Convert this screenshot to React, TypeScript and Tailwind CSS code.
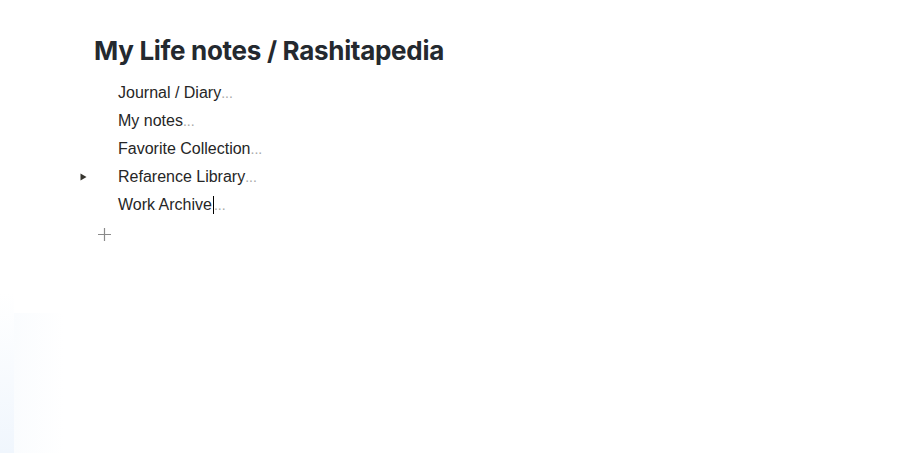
const items = [
  { title: "Journal / Diary", toggle: false },
  { title: "My notes", toggle: false },
  { title: "Favorite Collection", toggle: false },
  { title: "Refarence Library", toggle: true },
  { title: "Work Archive", toggle: false, caret: true },
];

function Triangle() {
  return (
    <svg width="7" height="8" viewBox="0 0 7 8" className="text-[#37352f]">
      <path d="M0.5 0.5 L6.5 4 L0.5 7.5 Z" fill="currentColor" />
    </svg>
  );
}

function PlusIcon() {
  return (
    <svg width="13" height="13" viewBox="0 0 13 13" className="text-[#8a8a8a]">
      <path d="M6.5 0 V13 M0 6.5 H13" stroke="currentColor" strokeWidth="1.2" />
    </svg>
  );
}

export default function App() {
  return (
    <div
      className="relative h-[453px] w-full overflow-hidden bg-white"
      style={{ fontFamily: "Inter, 'Liberation Sans', sans-serif" }}
    >
      {/* faint sidebar edge at bottom left */}
      <div className="absolute bottom-0 left-0 h-[160px] w-[14px] bg-gradient-to-b from-white to-[#f0f6fd]" />
      <div className="absolute bottom-0 left-[14px] h-[140px] w-[50px] bg-gradient-to-r from-[#fafcfe] to-white" />

      <div className="relative pl-[94px] pt-[33px]">
        <h1 className="text-[26px] font-bold leading-[36px] tracking-[-0.3px] text-[#24292f]">
          My Life notes / Rashitapedia
        </h1>

        <div
          className="-ml-[24px] mt-[10px] flex flex-col"
          style={{ fontFamily: "'Liberation Sans', Arial, sans-serif" }}
        >
          {items.map((item) => (
            <div key={item.title} className="flex h-[28px] items-center">
              <div className="flex w-[48px] items-center pl-[10px]">
                {item.toggle && <Triangle />}
              </div>
              <span className="text-[16px] leading-[28px] text-[#262626]">
                {item.title}
              </span>
              {item.caret && (
                <span className="ml-[1px] inline-block h-[18px] w-[1px] bg-black" />
              )}
              <span className="text-[14px] leading-[28px] text-[#a8a8a8]">...</span>
            </div>
          ))}
          <div className="mt-[1px] flex h-[28px] items-center pl-[28px]">
            <PlusIcon />
          </div>
        </div>
      </div>
    </div>
  );
}
